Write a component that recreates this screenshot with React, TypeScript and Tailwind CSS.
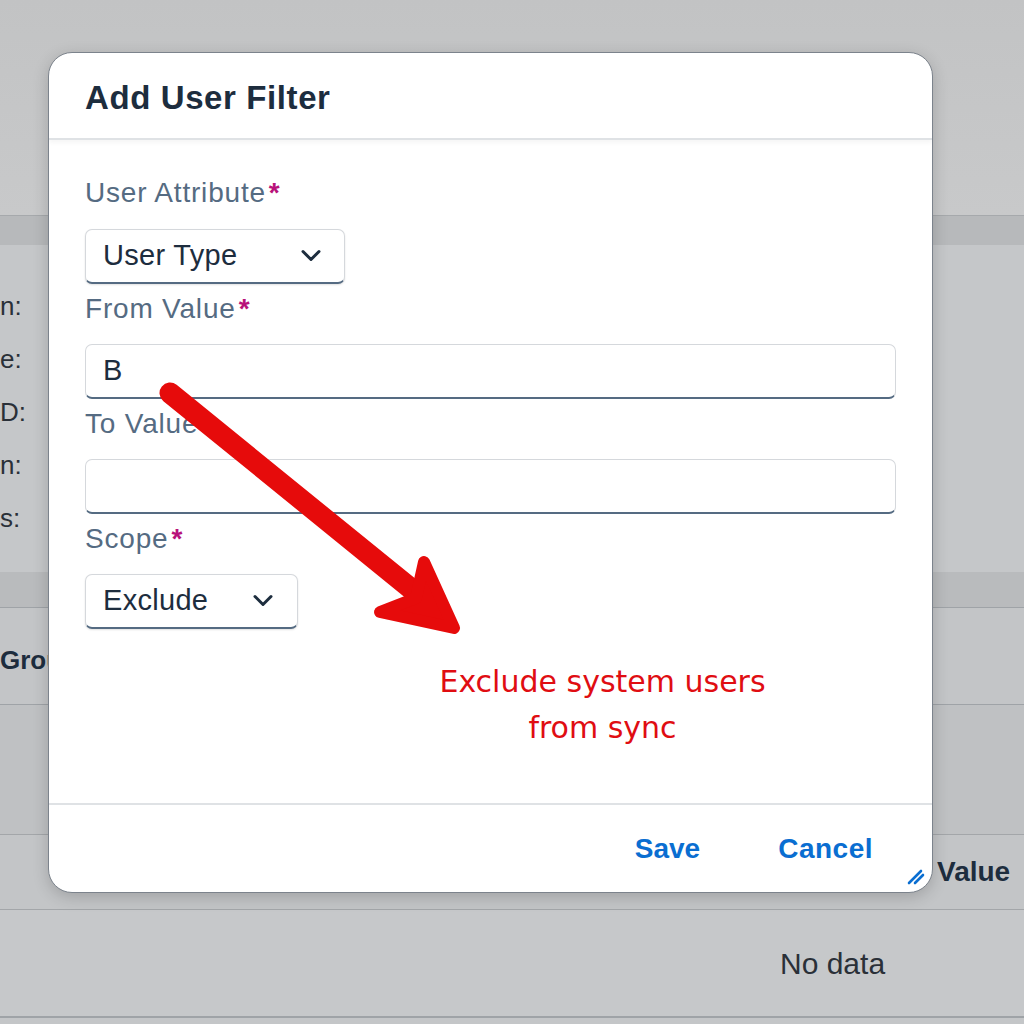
import React from 'react';

const labelCls = "h-[36px] leading-[36px] text-[28px] tracking-[0.8px] text-[#556b82]";

function Required({ text }: { text: string }) {
  return (
    <div className={labelCls}>
      {text}
      <span className="text-[#b8127a] font-bold ml-[3px]">*</span>
    </div>
  );
}

function Chevron() {
  return (
    <svg width="24" height="16" viewBox="0 0 24 16" fill="none">
      <path d="M4 3.5 L12 11.5 L20 3.5" stroke="#1d2d3e" strokeWidth="3" strokeLinecap="round" strokeLinejoin="round" />
    </svg>
  );
}

function SelectBox({ value, width, chevronGap }: { value: string; width: string; chevronGap: string }) {
  return (
    <div
      className={`${width} h-[55px] flex items-center justify-between pl-[17px] ${chevronGap} bg-white border border-[#d5d8dc] border-b-2 border-b-[#556b82] rounded-[7px] shadow-[0_1px_2px_rgba(0,0,0,0.12)]`}
    >
      <span className="text-[29px] tracking-[0.3px] text-[#1d2d3e]">{value}</span>
      <Chevron />
    </div>
  );
}

function TextInput({ value }: { value?: string }) {
  return (
    <div className="w-full h-[55px] flex items-center pl-[17px] bg-white border border-[#d5d8dc] border-b-2 border-b-[#556b82] rounded-[7px]">
      <span className="text-[29px] text-[#1d2d3e]">{value}</span>
    </div>
  );
}

export default function App() {
  const sideLabels = ["n:", "e:", "D:", "n:", "s:"];

  return (
    <div className="relative w-[1024px] h-[1024px] overflow-hidden bg-[#c4c6c8]" style={{ fontFamily: '"Liberation Sans", Arial, sans-serif' }}>
      {/* Background page */}
      <div className="flex flex-col w-full">
        <div className="h-[215px] bg-gradient-to-b from-[#c2c3c4] to-[#c8c9ca]" />
        <div className="h-[30px] bg-[#b7b9bb] border-t border-[#a6a9ac]" />
        <div className="h-[327px] bg-[#c5c7c9] pt-[35px]">
          {sideLabels.map((l, i) => (
            <div key={i} className="h-[53px] flex items-center text-[26px] text-[#2a3038]">
              {l}
            </div>
          ))}
        </div>
        <div className="h-[35px] bg-[#b9bbbd]" />
        <div className="h-[98px] bg-[#c3c5c7] border-t border-[#9fa3a7] border-b flex items-center pt-2">
          <span className="text-[26px] font-bold text-[#1d2d3e]">Grou</span>
        </div>
        <div className="h-[130px] bg-[#bfc1c3] border-b border-[#a3a6a9]" />
        <div className="h-[75px] bg-[#c3c5c7] border-b border-[#a3a6a9] flex items-center pl-[937px]">
          <span className="text-[28px] font-bold text-[#1d2d3e]">Value</span>
        </div>
        <div className="h-[108px] bg-[#c6c8ca] border-b-2 border-[#9fa3a7] flex items-center pl-[780px]">
          <span className="text-[30px] text-[#2a3038]">No data</span>
        </div>
      </div>

      {/* Dialog */}
      <div className="absolute left-[48px] top-[52px] w-[885px] h-[841px] bg-white rounded-[24px] border border-[#7c838c] shadow-[0_4px_16px_rgba(0,0,0,0.18)] flex flex-col overflow-hidden">
        <div className="h-[87px] shrink-0 flex items-center px-[36px] border-b-2 border-[#dfe2e5] shadow-[0_3px_4px_rgba(0,0,0,0.04)]">
          <h2 className="text-[33px] tracking-[0.6px] font-bold text-[#1d2d3e] pt-[4px]">Add User Filter</h2>
        </div>

        <div className="flex-1 flex flex-col px-[36px] pt-[35px]">
          <Required text="User Attribute" />
          <div className="mt-[18px]">
            <SelectBox value="User Type" width="w-[260px]" chevronGap="pr-[21px]" />
          </div>
          <div className="mt-[7px]">
            <Required text="From Value" />
          </div>
          <div className="mt-[17px]">
            <TextInput value="B" />
          </div>
          <div className={`mt-[7px] ${labelCls}`}>To Value</div>
          <div className="mt-[17px]">
            <TextInput />
          </div>
          <div className="mt-[7px]">
            <Required text="Scope" />
          </div>
          <div className="mt-[17px]">
            <SelectBox value="Exclude" width="w-[213px]" chevronGap="pr-[22px]" />
          </div>

          <div className="mt-[30px] flex flex-col items-center pl-[224px] text-[30px] leading-[46px] text-[#e00d12]" style={{ fontFamily: '"DejaVu Sans", Verdana, sans-serif' }}>
            <span className="whitespace-nowrap">Exclude system users</span>
            <span>from sync</span>
          </div>
        </div>

        <div className="relative h-[89px] shrink-0 border-t-2 border-[#dfe2e5] flex items-center justify-end pr-[59px] gap-[78px]">
          <button className="text-[28px] font-bold text-[#0a6ed1]">Save</button>
          <button className="text-[28px] tracking-[0.5px] font-bold text-[#0a6ed1]">Cancel</button>
          <svg className="absolute right-[6px] bottom-[6px]" width="20" height="20" viewBox="0 0 20 20">
            <path d="M3 17 L15 5" stroke="#0a6ed1" strokeWidth="2.6" strokeLinecap="round" />
            <path d="M9 17 L17 9" stroke="#0a6ed1" strokeWidth="2.6" strokeLinecap="round" />
          </svg>
        </div>
      </div>

      {/* Red annotation arrow */}
      <svg className="absolute left-0 top-0 pointer-events-none" width="1024" height="1024" viewBox="0 0 1024 1024">
        <line x1="170" y1="393" x2="420" y2="596" stroke="#e60b0b" strokeWidth="21" strokeLinecap="round" />
        <polygon
          points="424,562 454,628 380,612 416,598"
          fill="#e60b0b"
          stroke="#e60b0b"
          strokeWidth="12"
          strokeLinejoin="round"
        />
      </svg>
    </div>
  );
}
